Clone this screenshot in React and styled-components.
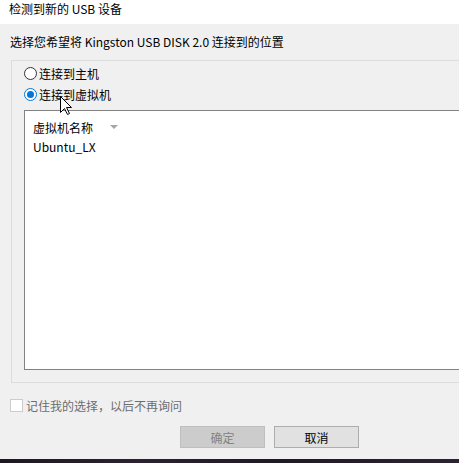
import React from "react";
import styled, { createGlobalStyle } from "styled-components";

const Global = createGlobalStyle`
  html, body { margin: 0; padding: 0; background: #f0f0f0; }
  body { font-family: "Noto Sans CJK SC", "Noto Sans", sans-serif; font-size: 12px; color: #000; }
`;

const Window = styled.div`
  position: relative;
  width: 459px;
  height: 463px;
  overflow: hidden;
  display: flex;
  flex-direction: column;
  background: #f0f0f0;
`;

const TitleBar = styled.div`
  height: 24px;
  flex: none;
  background: #ffffff;
  padding-left: 9px;
  display: flex;
  align-items: flex-start;
  line-height: 18px;
  color: #000;
`;

const Body = styled.div`
  flex: 1;
  display: flex;
  flex-direction: column;
  padding-left: 10px;
`;

const Prompt = styled.div`
  margin-top: 8px;
  height: 20px;
  line-height: 20px;
  white-space: nowrap;
`;

const GroupBox = styled.div`
  margin-top: 8px;
  margin-left: 1px;
  margin-right: -20px;
  border-top: 1px solid #dcdcdc;
  border-left: 1px solid #dcdcdc;
  border-bottom: 1px solid #dcdcdc;
  padding: 2px 0 12px 12px;
  display: flex;
  flex-direction: column;
`;

const RadioRow = styled.label`
  height: 21px;
  display: flex;
  align-items: center;
  gap: 2px;
  line-height: 21px;
`;

const RadioCircle = styled.span`
  width: 13px;
  height: 13px;
  box-sizing: border-box;
  border-radius: 50%;
  border: 1px solid ${(p) => (p.$checked ? "#0078d7" : "#333333")};
  background: #ffffff;
  display: flex;
  align-items: center;
  justify-content: center;
  flex: none;
  &::after {
    content: "";
    width: 7px;
    height: 7px;
    border-radius: 50%;
    background: ${(p) => (p.$checked ? "#0078d7" : "transparent")};
  }
`;

const ListBox = styled.div`
  margin-top: 5px;
  height: 260px;
  box-sizing: border-box;
  border: 1px solid #828282;
  border-right: none;
  background: #ffffff;
  padding: 7px 0 0 8px;
  display: flex;
  flex-direction: column;
`;

const HeaderRow = styled.div`
  height: 19px;
  display: flex;
  align-items: center;
  gap: 17px;
`;

const SortArrow = styled.span`
  width: 0;
  height: 0;
  border-left: 4px solid transparent;
  border-right: 4px solid transparent;
  border-top: 4px solid #a6a6a6;
  margin-top: -1px;
`;

const Item = styled.div`
  height: 20px;
  line-height: 20px;
`;

const CheckRow = styled.label`
  margin-top: 15px;
  height: 14px;
  display: flex;
  align-items: center;
  gap: 3px;
  color: #6d6d6d;
`;

const CheckBox = styled.span`
  width: 13px;
  height: 13px;
  box-sizing: border-box;
  border: 1px solid #cccccc;
  background: #ffffff;
  flex: none;
`;

const ButtonRow = styled.div`
  margin-top: 14px;
  padding-left: 170px;
  display: flex;
  gap: 9px;
`;

const Button = styled.div`
  width: 85px;
  height: 22px;
  box-sizing: border-box;
  border: 1px solid ${(p) => (p.$disabled ? "#bfbfbf" : "#adadad")};
  background: ${(p) => (p.$disabled ? "#cccccc" : "#e1e1e1")};
  color: ${(p) => (p.$disabled ? "#838383" : "#000000")};
  display: flex;
  align-items: center;
  justify-content: center;
`;

const Desktop = styled.div`
  height: 4px;
  flex: none;
  background: linear-gradient(90deg, #1c1820 0%, #2a2230 30%, #1e1a24 60%, #2b2331 100%);
`;

const Cursor = styled.svg`
  position: absolute;
  left: 60px;
  top: 96px;
  pointer-events: none;
`;

export default function App() {
  return (
    <>
      <Global />
      <Window>
        <TitleBar>检测到新的 USB 设备</TitleBar>
        <Body>
          <Prompt>选择您希望将 Kingston USB DISK 2.0 连接到的位置</Prompt>
          <GroupBox>
            <RadioRow>
              <RadioCircle />
              连接到主机
            </RadioRow>
            <RadioRow>
              <RadioCircle $checked />
              连接到虚拟机
            </RadioRow>
            <ListBox>
              <HeaderRow>
                <span>虚拟机名称</span>
                <SortArrow />
              </HeaderRow>
              <Item>Ubuntu_LX</Item>
            </ListBox>
          </GroupBox>
          <CheckRow>
            <CheckBox />
            记住我的选择，以后不再询问
          </CheckRow>
          <ButtonRow>
            <Button $disabled>确定</Button>
            <Button>取消</Button>
          </ButtonRow>
        </Body>
        <Desktop />
        <Cursor width="13" height="20" viewBox="0 0 13 20">
          <polygon
            points="0.5,0.5 0.5,16.5 4.5,12.5 7.5,18.5 9.5,17.5 6.5,11.5 11.5,11.5"
            fill="#ffffff"
            stroke="#000000"
            strokeWidth="1"
            strokeLinejoin="miter"
          />
        </Cursor>
      </Window>
    </>
  );
}
